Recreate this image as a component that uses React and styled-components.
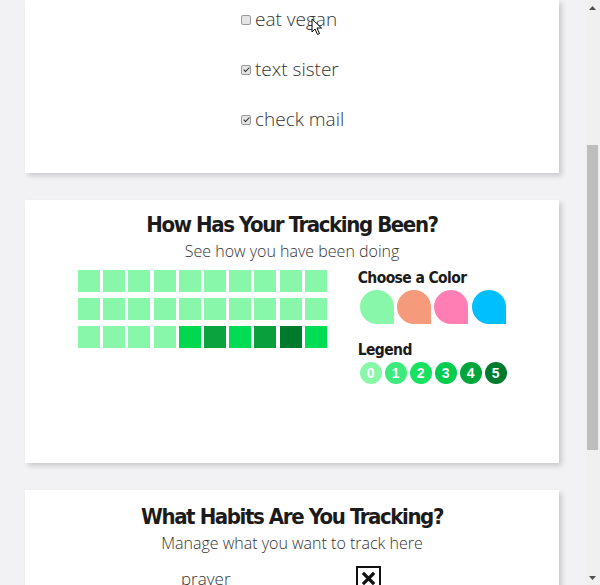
import React from "react";
import styled, { createGlobalStyle } from "styled-components";

const Global = createGlobalStyle`
  html, body { margin: 0; padding: 0; overflow: hidden; }
  body { background: #f2f1f4; font-family: "Open Sans", "Noto Sans", sans-serif; color: #222; }
`;

const Viewport = styled.div`
  display: flex;
  height: 585px;
  width: 600px;
  overflow: hidden;
  position: relative;
`;

const Main = styled.main`
  width: 585px;
  box-sizing: border-box;
  padding: 0 26px 0 25px;
  display: flex;
  flex-direction: column;
  gap: 27px;
`;

const Card = styled.section`
  background: #fff;
  box-shadow: 3px 3px 5px rgba(0, 0, 0, 0.16);
  box-sizing: border-box;
  height: ${(p) => p.$h}px;
  flex-shrink: 0;
  padding-top: ${(p) => p.$pt || 0}px;
`;

const TodoList = styled.ul`
  list-style: none;
  margin: 0;
  padding: 5px 0 0 216px;
  display: flex;
  flex-direction: column;
  gap: 22px;
`;

const TodoItem = styled.li`
  display: flex;
  align-items: center;
  height: 28px;
  font-size: 19px;
  font-weight: 300;
  color: #333;
`;

const Check = styled.input.attrs({ type: "checkbox" })`
  appearance: none;
  -webkit-appearance: none;
  width: 10px;
  height: 10px;
  margin: 1px 4px 0 0;
  box-sizing: border-box;
  border: 1px solid #9a9a9a;
  border-radius: 2px;
  background: #e4e4e4;
  position: relative;
  &:checked::after {
    content: "";
    position: absolute;
    left: 2.5px;
    top: 0px;
    width: 2px;
    height: 5px;
    border: solid #333;
    border-width: 0 1.5px 1.5px 0;
    transform: rotate(45deg);
  }
`;

const headFont = `"DejaVu Sans", "Liberation Sans", sans-serif`;

const Title = styled.h2`
  margin: 0;
  text-align: center;
  font-family: ${headFont};
  font-stretch: condensed;
  font-weight: 700;
  font-size: 22px;
  letter-spacing: -1.4px;
  line-height: 30px;
  color: #1b1b1b;
`;

const Subtitle = styled.p`
  margin: 0;
  text-align: center;
  font-size: 16px;
  line-height: 22px;
  font-weight: 300;
  color: #333;
`;

const TrackRow = styled.div`
  display: flex;
  gap: 31px;
  padding-left: 53px;
  margin-top: 8px;
`;

const Grid = styled.div`
  display: grid;
  grid-template-columns: repeat(10, 22px);
  column-gap: 3.2px;
  row-gap: 6px;
  align-self: flex-start;
`;

const Square = styled.div`
  width: 22px;
  height: 22px;
  background: ${(p) => p.$c};
`;

const Side = styled.div`
  display: flex;
  flex-direction: column;
  margin-top: -2px;
`;

const Label = styled.h3`
  margin: 0;
  font-family: ${headFont};
  font-stretch: condensed;
  font-weight: 700;
  font-size: 15.5px;
  letter-spacing: -0.6px;
  line-height: 20px;
  color: #1b1b1b;
`;

const Swatches = styled.div`
  display: flex;
  gap: 3.3px;
  margin: 2px 0 16px 2px;
`;

const Drop = styled.div`
  width: 34px;
  height: 34px;
  background: ${(p) => p.$c};
  border-radius: 50% 50% 0 50%;
`;

const Legend = styled.div`
  display: flex;
  gap: 3px;
  margin: 2px 0 0 2px;
`;

const Dot = styled.div`
  width: 22px;
  height: 22px;
  border-radius: 50%;
  background: ${(p) => p.$c};
  color: #fff;
  display: flex;
  align-items: center;
  justify-content: center;
  font-family: "Liberation Sans", sans-serif;
  font-weight: 700;
  font-size: 14px;
`;

const HabitRow = styled.div`
  display: flex;
  align-items: center;
  padding-left: 156px;
  margin-top: 12px;
`;

const HabitName = styled.span`
  width: 175px;
  font-size: 17px;
  font-weight: 300;
  color: #333;
`;

const RemoveBtn = styled.button`
  width: 25px;
  height: 25px;
  box-sizing: border-box;
  border: 2px solid #111;
  background: #fff;
  padding: 0;
  display: flex;
  align-items: center;
  justify-content: center;
`;

const Scrollbar = styled.div`
  width: 15px;
  background: #f0f0f0;
  display: flex;
  flex-direction: column;
  align-items: center;
`;

const Arrow = styled.div`
  height: 15px;
  display: flex;
  align-items: center;
  justify-content: center;
`;

const Thumb = styled.div`
  width: 11px;
  background: #bdbdbd;
  margin-top: ${(p) => p.$top}px;
  height: ${(p) => p.$h}px;
`;

const Spacer = styled.div`
  flex: 1;
`;

const Cursor = styled.svg`
  position: absolute;
  left: 311px;
  top: 18px;
`;

const L = "#88f7a9";
const row3 = [L, L, L, L, "#00d94f", "#0aa33e", "#00dd55", "#0a9f3d", "#007a2d", "#00dd55"];
const squares = [...Array(20).fill(L), ...row3];
const drops = ["#88f7a9", "#f59a7a", "#ff7fb5", "#00bfff"];
const legend = ["#88f7a9", "#3eea7b", "#17e25f", "#00cc4e", "#00a63c", "#007a2e"];

export default function App() {
  return (
    <Viewport>
      <Global />
      <Main>
        <Card $h={173}>
          <TodoList>
            <TodoItem><Check readOnly />eat vegan</TodoItem>
            <TodoItem><Check readOnly defaultChecked />text sister</TodoItem>
            <TodoItem><Check readOnly defaultChecked />check mail</TodoItem>
          </TodoList>
        </Card>
        <Card $h={263} $pt={10}>
          <Title>How Has Your Tracking Been?</Title>
          <Subtitle>See how you have been doing</Subtitle>
          <TrackRow>
            <Grid>
              {squares.map((c, i) => (
                <Square key={i} $c={c} />
              ))}
            </Grid>
            <Side>
              <Label>Choose a Color</Label>
              <Swatches>
                {drops.map((c) => (
                  <Drop key={c} $c={c} />
                ))}
              </Swatches>
              <Label>Legend</Label>
              <Legend>
                {legend.map((c, i) => (
                  <Dot key={i} $c={c}>{i}</Dot>
                ))}
              </Legend>
            </Side>
          </TrackRow>
        </Card>
        <Card $h={200} $pt={12}>
          <Title>What Habits Are You Tracking?</Title>
          <Subtitle>Manage what you want to track here</Subtitle>
          <HabitRow>
            <HabitName>prayer</HabitName>
            <RemoveBtn aria-label="remove">
              <svg width="13" height="13" viewBox="0 0 13 13">
                <path d="M2 2 L11 11 M11 2 L2 11" stroke="#111" strokeWidth="3.2" strokeLinecap="square" />
              </svg>
            </RemoveBtn>
          </HabitRow>
        </Card>
      </Main>
      <Scrollbar>
        <Arrow>
          <svg width="7" height="4" viewBox="0 0 7 4"><path d="M0 4 L3.5 0 L7 4 Z" fill="#505050" /></svg>
        </Arrow>
        <Thumb $top={130} $h={305} />
        <Spacer />
        <Arrow>
          <svg width="7" height="4" viewBox="0 0 7 4"><path d="M0 0 L3.5 4 L7 0 Z" fill="#505050" /></svg>
        </Arrow>
      </Scrollbar>
      <Cursor width="12" height="18" viewBox="0 0 12 18">
        <path d="M1 1 L1 14 L4 11 L6.5 16.5 L8.5 15.5 L6 10 L10.5 10 Z" fill="#fff" stroke="#000" strokeWidth="1" />
      </Cursor>
    </Viewport>
  );
}
